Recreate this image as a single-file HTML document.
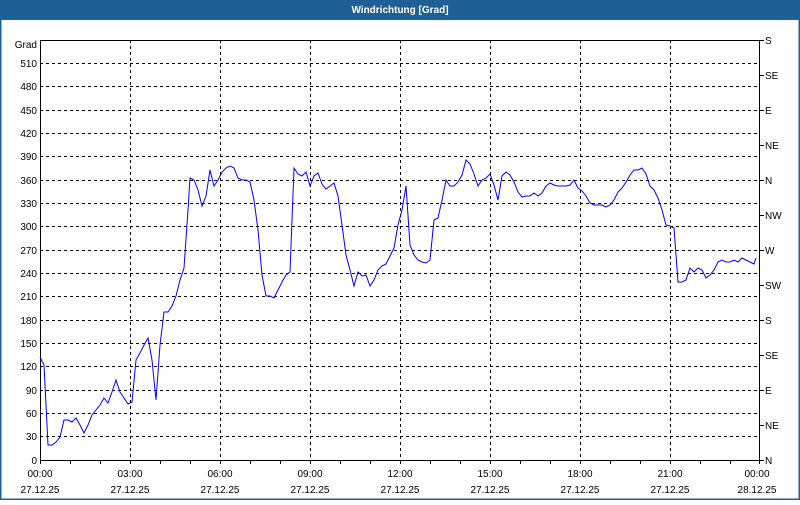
<!DOCTYPE html>
<html><head><style>
body{margin:0;width:800px;height:500px;overflow:hidden;background:#fff;font-family:"Liberation Sans",sans-serif;}
</style></head><body>
<svg width="800" height="500" xmlns="http://www.w3.org/2000/svg" font-family="Liberation Sans, sans-serif" font-size="10">
<rect x="0" y="0" width="800" height="500" fill="#fff"/>
<rect x="0" y="0" width="800" height="20" fill="#1e6096"/>
<rect x="0" y="0" width="1.5" height="500" fill="#1e6096"/>
<rect x="798.5" y="0" width="1.5" height="500" fill="#1e6096"/>
<rect x="0" y="498.5" width="800" height="1.5" fill="#1e6096"/>
<text x="400" y="13" fill="#fff" font-weight="bold" text-anchor="middle">Windrichtung [Grad]</text>
<g stroke="#000" stroke-dasharray="3,3" stroke-width="1">
<path d="M40 63.5H760M40 86.5H760M40 110.5H760M40 133.5H760M40 156.5H760M40 180.5H760M40 203.5H760M40 226.5H760M40 250.5H760M40 273.5H760M40 296.5H760M40 320.5H760M40 343.5H760M40 366.5H760M40 390.5H760M40 413.5H760M40 436.5H760"/>
<path d="M130.5 40V460M220.5 40V460M310.5 40V460M400.5 40V460M490.5 40V460M580.5 40V460M670.5 40V460"/>
</g>
<rect x="40.5" y="40.5" width="719" height="420" fill="none" stroke="#000"/>
<g stroke="#000">
<path d="M70.5 460v4M100.5 460v4M130.5 460v4M160.5 460v4M190.5 460v4M220.5 460v4M250.5 460v4M280.5 460v4M310.5 460v4M340.5 460v4M370.5 460v4M400.5 460v4M430.5 460v4M460.5 460v4M490.5 460v4M520.5 460v4M550.5 460v4M580.5 460v4M610.5 460v4M640.5 460v4M670.5 460v4M700.5 460v4M730.5 460v4M40.5 460v4M759.5 460v4"/>
<path d="M760 40.5h4M760 75.5h4M760 110.5h4M760 145.5h4M760 180.5h4M760 215.5h4M760 250.5h4M760 285.5h4M760 320.5h4M760 355.5h4M760 390.5h4M760 425.5h4M760 460.5h4"/>
</g>
<g text-anchor="end" fill="#000">
<text x="37" y="48">Grad</text>
<text x="37" y="67">510</text><text x="37" y="90">480</text><text x="37" y="114">450</text><text x="37" y="137">420</text><text x="37" y="160">390</text><text x="37" y="184">360</text><text x="37" y="207">330</text><text x="37" y="230">300</text><text x="37" y="254">270</text><text x="37" y="277">240</text><text x="37" y="300">210</text><text x="37" y="324">180</text><text x="37" y="347">150</text><text x="37" y="370">120</text><text x="37" y="394">90</text><text x="37" y="417">60</text><text x="37" y="440">30</text><text x="37" y="464">0</text>
</g>
<g fill="#000">
<text x="765" y="44">S</text><text x="765" y="79">SE</text><text x="765" y="114">E</text><text x="765" y="149">NE</text><text x="765" y="184">N</text><text x="765" y="219">NW</text><text x="765" y="254">W</text><text x="765" y="289">SW</text><text x="765" y="324">S</text><text x="765" y="359">SE</text><text x="765" y="394">E</text><text x="765" y="429">NE</text><text x="765" y="464">N</text>
</g>
<g text-anchor="middle" fill="#000">
<text x="40" y="477">00:00</text><text x="40" y="493">27.12.25</text>
<text x="130" y="477">03:00</text><text x="130" y="493">27.12.25</text>
<text x="220" y="477">06:00</text><text x="220" y="493">27.12.25</text>
<text x="310" y="477">09:00</text><text x="310" y="493">27.12.25</text>
<text x="400" y="477">12:00</text><text x="400" y="493">27.12.25</text>
<text x="490" y="477">15:00</text><text x="490" y="493">27.12.25</text>
<text x="580" y="477">18:00</text><text x="580" y="493">27.12.25</text>
<text x="670" y="477">21:00</text><text x="670" y="493">27.12.25</text>
<text x="757" y="477">00:00</text><text x="757" y="493">28.12.25</text>
</g>
<polyline fill="none" stroke="#0000ff" stroke-width="1" points="40,357 44,365 48,445 52,445 56,442 60,437 64,420 68,420 72,422 76,418 80,425 84,433 88,425 92,415 96,410 100,405 104,398 108,403 112,392 116,380 120,392 124,398 128,404 132,402 136,360 140,353 144,345 148,338 152,360 156,400 160,345 164,312 168,312 172,306 176,296 180,280 184,268 188,210 190,178 194,180 198,190 202,206 206,196 210,170 214,186 218,180 222,172 226,168 230,166 234,168 238,178 242,180 246,180 250,182 254,200 258,230 262,275 266,296 270,296 274,298 278,290 282,282 286,275 290,272 294,168 298,174 302,176 306,172 310,186 314,176 318,173 322,184 326,189 330,186 334,183 338,196 342,225 346,255 350,270 354,286 358,272 362,276 366,275 370,286 374,280 378,270 382,266 386,264 390,256 394,248 398,225 402,210 406,186 410,245 414,255 418,260 422,262 426,263 430,260 434,220 438,218 442,200 446,180 450,186 454,186 458,182 462,175 466,160 470,164 474,174 478,186 482,180 486,178 490,174 494,185 498,200 502,176 506,172 510,175 514,182 518,192 522,197 526,196 530,196 534,193 538,196 542,193 546,186 550,183 554,185 558,186 562,186 566,186 570,185 574,180 578,188 582,191 586,196 590,203 594,205 598,205 602,205 606,207 610,205 614,200 618,192 622,188 626,182 630,175 634,170 638,170 642,168 646,174 650,186 654,190 658,198 662,210 666,225 670,226 674,228 678,282 682,282 686,280 690,268 694,272 698,268 702,270 706,278 710,275 714,270 718,262 722,260 726,262 730,262 734,260 738,262 742,258 746,260 750,262 754,264 756,258"/>
</svg>
</body></html>
